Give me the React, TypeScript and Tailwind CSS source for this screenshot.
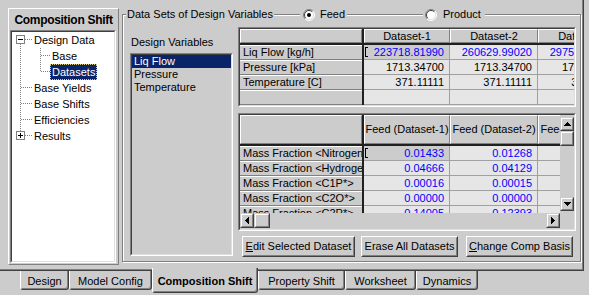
import React from "react";

type Kids = { children?: React.ReactNode };

function Sunken({ className = "", innerClassName = "", children }: { className?: string; innerClassName?: string } & Kids) {
  return (
    <div className={`border border-[#808080] border-r-white border-b-white ${className}`}>
      <div className={`h-full w-full border border-[#404040] border-r-[#dfdfdf] border-b-[#dfdfdf] overflow-hidden ${innerClassName}`}>
        {children}
      </div>
    </div>
  );
}

function Btn({ className = "", children }: { className?: string } & Kids) {
  return (
    <div className={`h-[21px] shrink-0 border border-white border-r-[#404040] border-b-[#404040] ${className}`}>
      <div className="h-full w-full border border-[#cccccc] border-r-[#808080] border-b-[#808080] flex items-center justify-center leading-none whitespace-nowrap">
        {children}
      </div>
    </div>
  );
}

function Arrow({ dir }: { dir: "up" | "down" | "left" | "right" }) {
  if (dir === "up")
    return (
      <svg width="7" height="4" viewBox="0 0 7 4" shapeRendering="crispEdges">
        <rect x="3" y="0" width="1" height="1" fill="#000" />
        <rect x="2" y="1" width="3" height="1" fill="#000" />
        <rect x="1" y="2" width="5" height="1" fill="#000" />
        <rect x="0" y="3" width="7" height="1" fill="#000" />
      </svg>
    );
  if (dir === "down")
    return (
      <svg width="7" height="4" viewBox="0 0 7 4" shapeRendering="crispEdges">
        <rect x="0" y="0" width="7" height="1" fill="#000" />
        <rect x="1" y="1" width="5" height="1" fill="#000" />
        <rect x="2" y="2" width="3" height="1" fill="#000" />
        <rect x="3" y="3" width="1" height="1" fill="#000" />
      </svg>
    );
  if (dir === "left")
    return (
      <svg width="4" height="7" viewBox="0 0 4 7" shapeRendering="crispEdges">
        <rect x="0" y="3" width="1" height="1" fill="#000" />
        <rect x="1" y="2" width="1" height="3" fill="#000" />
        <rect x="2" y="1" width="1" height="5" fill="#000" />
        <rect x="3" y="0" width="1" height="7" fill="#000" />
      </svg>
    );
  return (
    <svg width="4" height="7" viewBox="0 0 4 7" shapeRendering="crispEdges">
      <rect x="0" y="0" width="1" height="7" fill="#000" />
      <rect x="1" y="1" width="1" height="5" fill="#000" />
      <rect x="2" y="2" width="1" height="3" fill="#000" />
      <rect x="3" y="3" width="1" height="1" fill="#000" />
    </svg>
  );
}

function SBtn({ dir, className = "" }: { dir: "up" | "down" | "left" | "right"; className?: string }) {
  return (
    <div className={`shrink-0 border border-[#cccccc] border-r-[#404040] border-b-[#404040] ${className}`}>
      <div className="h-full w-full border border-white border-r-[#808080] border-b-[#808080] flex items-center justify-center">
        <Arrow dir={dir} />
      </div>
    </div>
  );
}

function Thumb({ className = "" }: { className?: string }) {
  return (
    <div className={`shrink-0 border border-[#cccccc] border-r-[#404040] border-b-[#404040] ${className}`}>
      <div className="h-full w-full border border-white border-r-[#808080] border-b-[#808080]" />
    </div>
  );
}

function Radio({ checked }: { checked: boolean }) {
  return (
    <svg width="12" height="12" viewBox="0 0 12 12" className="shrink-0">
      <circle cx="6" cy="6" r="5" fill="#fff" />
      <path d="M2.1 9.9 A5.5 5.5 0 0 1 9.9 2.1" fill="none" stroke="#808080" strokeWidth="1" />
      <path d="M9.9 2.1 A5.5 5.5 0 0 1 2.1 9.9" fill="none" stroke="#ffffff" strokeWidth="1" />
      <path d="M2.8 9.2 A4.5 4.5 0 0 1 9.2 2.8" fill="none" stroke="#404040" strokeWidth="1" />
      <path d="M9.2 2.8 A4.5 4.5 0 0 1 2.8 9.2" fill="none" stroke="#dfdfdf" strokeWidth="1" />
      {checked && <circle cx="6" cy="6" r="2" fill="#000" />}
    </svg>
  );
}

const DOT = { stroke: "#808080", strokeDasharray: "1 1", strokeWidth: 1, fill: "none" } as const;

function ExpandBox({ plus }: { plus?: boolean }) {
  return (
    <g shapeRendering="crispEdges">
      <rect x="4.5" y="3.5" width="8" height="8" fill="#fff" stroke="#808080" />
      <line x1="6" y1="7.5" x2="11" y2="7.5" stroke="#000" />
      {plus && <line x1="8.5" y1="5" x2="8.5" y2="10" stroke="#000" />}
    </g>
  );
}

function TreeBox() {
  return (
    <Sunken className="ml-[1px] w-[106px] h-[233px]" innerClassName="bg-white">
      <div className="flex flex-col pt-0">
        {/* Design Data */}
        <div className="flex h-[16px] items-center">
          <svg width="22" height="16" className="shrink-0" shapeRendering="crispEdges">
            <line x1="8.5" y1="12" x2="8.5" y2="16" {...DOT} />
            <line x1="13" y1="7.5" x2="21" y2="7.5" {...DOT} />
            <ExpandBox />
          </svg>
          <span className="leading-[14px] whitespace-nowrap">Design Data</span>
        </div>
        {/* Base */}
        <div className="flex h-[16px] items-center">
          <svg width="40" height="16" className="shrink-0" shapeRendering="crispEdges">
            <line x1="8.5" y1="0" x2="8.5" y2="16" {...DOT} />
            <line x1="28.5" y1="0" x2="28.5" y2="16" {...DOT} />
            <line x1="29" y1="7.5" x2="38" y2="7.5" {...DOT} />
          </svg>
          <span className="leading-[14px] whitespace-nowrap">Base</span>
        </div>
        {/* Datasets */}
        <div className="flex h-[16px] items-center">
          <svg width="38" height="16" className="shrink-0" shapeRendering="crispEdges">
            <line x1="8.5" y1="0" x2="8.5" y2="16" {...DOT} />
            <line x1="28.5" y1="0" x2="28.5" y2="8" {...DOT} />
            <line x1="29" y1="7.5" x2="38" y2="7.5" {...DOT} />
          </svg>
          <span className="h-[16px] leading-[14px] px-[1px] whitespace-nowrap bg-[#0a246a] text-white border border-dotted border-[#d8cf8a]">
            Datasets
          </span>
        </div>
        {["Base Yields", "Base Shifts", "Efficiencies"].map((t) => (
          <div key={t} className="flex h-[16px] items-center">
            <svg width="22" height="16" className="shrink-0" shapeRendering="crispEdges">
              <line x1="8.5" y1="0" x2="8.5" y2="16" {...DOT} />
              <line x1="9" y1="7.5" x2="21" y2="7.5" {...DOT} />
            </svg>
            <span className="leading-[14px] whitespace-nowrap">{t}</span>
          </div>
        ))}
        {/* Results */}
        <div className="flex h-[16px] items-center">
          <svg width="22" height="16" className="shrink-0" shapeRendering="crispEdges">
            <line x1="8.5" y1="0" x2="8.5" y2="4" {...DOT} />
            <line x1="13" y1="7.5" x2="21" y2="7.5" {...DOT} />
            <ExpandBox plus />
          </svg>
          <span className="leading-[14px] whitespace-nowrap">Results</span>
        </div>
      </div>
    </Sunken>
  );
}

function HCell({ className = "", children }: { className?: string } & Kids) {
  return (
    <div className={`shrink-0 h-full border border-white border-r-[#808080] border-b-[#808080] bg-[#cccccc] flex items-center justify-center whitespace-nowrap leading-none ${className}`}>
      {children}
    </div>
  );
}

function Marker() {
  return <span className="w-[3px] h-[10px] ml-[1px] shrink-0 border-l border-t border-b border-black" />;
}

type Row = { label: string; v: string[]; blue?: boolean };

function DataRow({ r, first }: { r: Row; first?: boolean }) {
  const color = r.blue ? "text-[#0000ff]" : "text-black";
  return (
    <div className="flex h-[15px] shrink-0">
      <div className="w-[122px] shrink-0 border-t border-t-white border-b border-b-[#808080] bg-[#cccccc] pl-[3px] leading-[13px] whitespace-nowrap overflow-hidden">
        {r.label}
      </div>
      <div className="w-[2px] shrink-0 bg-[#202020]" />
      <div
        className={`w-[86px] shrink-0 border-r border-b border-[#a0a0a0] flex items-center justify-between pr-[5px] leading-[14px] ${color} ${
          first ? "bg-[#cccccc]" : "bg-[#e6e6e6]"
        }`}
      >
        {first ? <Marker /> : <span />}
        <span>{r.v[0]}</span>
      </div>
      <div className={`w-[88px] shrink-0 border-r border-b border-[#a0a0a0] bg-[#e6e6e6] text-right pr-[5px] leading-[14px] ${color}`}>
        {r.v[1]}
      </div>
      <div className={`w-[88px] shrink-0 border-r border-b border-[#a0a0a0] bg-[#e6e6e6] text-right pr-[5px] leading-[14px] ${color}`}>
        {r.v[2]}
      </div>
    </div>
  );
}

const upperRows: Row[] = [
  { label: "Liq Flow [kg/h]", v: ["223718.81990", "260629.99020", "297541.16050"], blue: true },
  { label: "Pressure [kPa]", v: ["1713.34700", "1713.34700", "1713.34700"] },
  { label: "Temperature [C]", v: ["371.11111", "371.11111", "371.11111"] },
  { label: "", v: ["", "", ""] },
];

const lowerRows: Row[] = [
  { label: "Mass Fraction <Nitrogen>", v: ["0.01433", "0.01268", ""], blue: true },
  { label: "Mass Fraction <Hydrogen>", v: ["0.04666", "0.04129", ""], blue: true },
  { label: "Mass Fraction <C1P*>", v: ["0.00016", "0.00015", ""], blue: true },
  { label: "Mass Fraction <C2O*>", v: ["0.00000", "0.00000", ""], blue: true },
  { label: "Mass Fraction <C2P*>", v: ["0.14005", "0.12393", ""], blue: true },
];

function UpperGrid() {
  return (
    <Sunken className="h-[80px] w-[338px]" innerClassName="bg-[#cccccc] flex flex-col">
      <div className="flex h-[14px] shrink-0">
        <HCell className="w-[122px]" />
        <div className="w-[2px] shrink-0 bg-[#202020]" />
        <HCell className="w-[86px]">Dataset-1</HCell>
        <HCell className="w-[88px]">Dataset-2</HCell>
        <HCell className="w-[88px]">Dataset-3</HCell>
      </div>
      <div className="h-[2px] shrink-0 bg-[#202020] w-[400px]" />
      {upperRows.map((r, i) => (
        <DataRow key={i} r={r} first={i === 0} />
      ))}
    </Sunken>
  );
}

function LowerGrid() {
  return (
    <Sunken className="mt-[6px] h-[118px] w-[338px]" innerClassName="bg-[#cccccc] flex flex-col">
      <div className="flex h-[98px] shrink-0">
        <div className="w-[320px] shrink-0 overflow-hidden flex flex-col">
          <div className="flex h-[29px] shrink-0">
            <HCell className="w-[122px]" />
            <div className="w-[2px] shrink-0 bg-[#202020]" />
            <HCell className="w-[86px]">Feed (Dataset-1)</HCell>
            <HCell className="w-[88px]">Feed (Dataset-2)</HCell>
            <HCell className="w-[88px]">Feed (Dataset-3)</HCell>
          </div>
          <div className="h-[2px] shrink-0 bg-[#202020] w-[400px]" />
          {lowerRows.map((r, i) => (
            <DataRow key={i} r={r} first={i === 0} />
          ))}
        </div>
        <div className="w-[14px] shrink-0 flex flex-col pt-[2px]">
          <SBtn dir="up" className="w-[14px] h-[14px]" />
          <Thumb className="w-[14px] h-[15px]" />
          <div className="h-[51px] shrink-0" />
          <SBtn dir="down" className="w-[14px] h-[14px]" />
        </div>
      </div>
      <div className="flex h-[16px] shrink-0 items-start">
        <SBtn dir="left" className="w-[14px] h-[15px]" />
        <Thumb className="w-[16px] h-[15px]" />
        <div className="w-[276px] shrink-0" />
        <SBtn dir="right" className="w-[14px] h-[15px]" />
      </div>
    </Sunken>
  );
}

function Tab({ className = "", selected, children }: { className?: string; selected?: boolean } & Kids) {
  if (selected)
    return (
      <div className={`relative z-10 -mt-[3px] h-[25px] shrink-0 bg-[#cccccc] border-l border-l-white border-r border-r-[#404040] border-b border-b-[#404040] rounded-b-[3px] shadow-[inset_-1px_-1px_0_#808080] flex justify-center pt-[7px] font-bold leading-[13px] whitespace-nowrap ${className}`}>
        {children}
      </div>
    );
  return (
    <div className={`h-[19px] shrink-0 bg-[#cccccc] border-l border-l-white border-r border-r-[#404040] border-b border-b-[#404040] rounded-b-[3px] shadow-[inset_-1px_-1px_0_#808080] flex justify-center pt-[4px] leading-[13px] whitespace-nowrap ${className}`}>
      {children}
    </div>
  );
}

export default function App() {
  return (
    <div className="w-[589px] h-[295px] overflow-hidden bg-[#cccccc] text-black text-[11px] font-['Liberation_Sans',Arial,sans-serif] flex flex-col">
      <div className="w-[584px] h-[271px] shrink-0 flex items-start border-r border-b border-[#404040] shadow-[inset_-1px_-1px_0_#808080]">
        {/* Left panel */}
        <div className="ml-[8px] mt-[8px] w-[111px] h-[257px] shrink-0 border border-white border-r-[#808080] border-b-[#808080] flex flex-col">
          <div className="h-[21px] shrink-0 flex items-center justify-center font-bold text-[12px] tracking-[-0.3px] whitespace-nowrap">
            Composition Shift
          </div>
          <TreeBox />
        </div>

        {/* Group box */}
        <div className="ml-[3px] mt-[14px] w-[459px] h-[248px] shrink-0 border border-[#808080] shadow-[inset_1px_1px_0_#ffffff,1px_1px_0_#ffffff] flex flex-col">
          <div className="-mt-[8px] h-[15px] shrink-0 flex items-center pl-[3px]">
            <div className="w-[174px] shrink-0 flex">
              <span className="bg-[#cccccc] px-[1px] leading-[13px] whitespace-nowrap">Data Sets of Design Variables</span>
            </div>
            <div className="w-[47px] shrink-0 h-[15px] bg-[#cccccc] flex items-center pl-[3px] gap-[5px]">
              <Radio checked />
              <span className="leading-[13px]">Feed</span>
            </div>
            <div className="w-[76px] shrink-0" />
            <div className="w-[62px] shrink-0 h-[15px] bg-[#cccccc] flex items-center pl-[2px] gap-[6px]">
              <Radio checked={false} />
              <span className="leading-[13px]">Product</span>
            </div>
          </div>

          <div className="flex pl-[7px] pt-[5px] gap-[5px]">
            {/* Left column */}
            <div className="w-[103px] shrink-0 flex flex-col pt-[9px]">
              <div className="h-[13px] leading-[13px] pl-[1px] whitespace-nowrap">Design Variables</div>
              <Sunken className="mt-[4px] w-[103px] h-[203px]" innerClassName="bg-[#cccccc] flex flex-col">
                <div className="h-[13px] leading-[13px] pl-[2px] bg-[#0a246a] text-white">Liq Flow</div>
                <div className="h-[13px] leading-[13px] pl-[2px]">Pressure</div>
                <div className="h-[13px] leading-[13px] pl-[2px]">Temperature</div>
              </Sunken>
            </div>

            {/* Right column */}
            <div className="w-[338px] shrink-0 flex flex-col">
              <UpperGrid />
              <LowerGrid />
              <div className="mt-[5px] flex pl-[4px]">
                <Btn className="w-[113px]">
                  <span>
                    <span className="underline">E</span>dit Selected Dataset
                  </span>
                </Btn>
                <Btn className="ml-[6px] w-[97px]">Erase All Datasets</Btn>
                <Btn className="ml-[8px] w-[107px]">
                  <span>
                    <span className="underline">C</span>hange Comp Basis
                  </span>
                </Btn>
              </div>
            </div>
          </div>
        </div>
      </div>

      {/* Tabs */}
      <div className="flex pl-[20px] items-start">
        <Tab className="w-[49px]">Design</Tab>
        <Tab className="w-[83px]">Model Config</Tab>
        <Tab className="w-[106px]" selected>
          Composition Shift
        </Tab>
        <Tab className="w-[87px]">Property Shift</Tab>
        <Tab className="w-[71px]">Worksheet</Tab>
        <Tab className="w-[62px]">Dynamics</Tab>
      </div>
    </div>
  );
}
